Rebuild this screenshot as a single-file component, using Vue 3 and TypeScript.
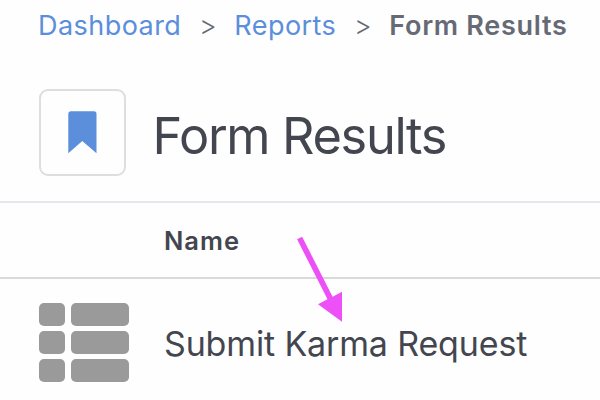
<script setup lang="ts">
interface Crumb {
  label: string
  current: boolean
}

const crumbs: Crumb[] = [
  { label: 'Dashboard', current: false },
  { label: 'Reports', current: false },
  { label: 'Form Results', current: true },
]

const rows: string[] = ['Submit Karma Request']
</script>

<template>
  <main class="page">
    <nav class="crumbs">
      <template v-for="(crumb, i) in crumbs" :key="crumb.label">
        <span v-if="i > 0" class="sep">&gt;</span>
        <span v-if="crumb.current" class="current">{{ crumb.label }}</span>
        <a v-else class="link">{{ crumb.label }}</a>
      </template>
    </nav>

    <header class="heading">
      <div class="bookmark">
        <svg width="29" height="43" viewBox="0 0 29 43">
          <path d="M3 0.3H26Q28.5 0.3 28.5 3V42.3L14.3 30L0.3 42.3V3Q0.3 0.3 3 0.3Z" fill="#5b8edb" />
        </svg>
      </div>
      <h1 class="title">Form Results</h1>
    </header>

    <section class="table">
      <div class="thead"><span class="column">Name</span></div>
      <div v-for="row in rows" :key="row" class="row">
        <div class="list-icon">
          <i v-for="n in 6" :key="n" class="cell"></i>
        </div>
        <span class="name">{{ row }}</span>
      </div>
    </section>

    <svg class="arrow" width="50" height="90" viewBox="0 0 50 90">
      <path d="M2.1 4.3L7.1 1.7L37.6 61.7L47 56.7V86.7L23 69.3L32.5 64.3Z" fill="#ed50f7" />
    </svg>
  </main>
</template>

<style>
body {
  margin: 0;
  background: #fefefe;
}
</style>

<style scoped>
.page {
  position: relative;
  box-sizing: border-box;
  width: 600px;
  height: 400px;
  overflow: hidden;
  background: #fefefe;
  color: #43464f;
  font-family: Inter, "Liberation Sans", sans-serif;
  white-space: nowrap;
}

.crumbs {
  display: flex;
  align-items: center;
  height: 51px;
  padding-left: 38px;
  font-size: 27px;
}

.link {
  letter-spacing: 0.45px;
  color: #5b8edb;
}

.sep {
  width: 53px;
  text-align: center;
  font-size: 27px;
  font-weight: 300;
  color: #666a75;
}

.current {
  font-weight: 600;
  letter-spacing: 0.7px;
  color: #666a75;
}

.heading {
  display: flex;
  align-items: center;
  height: 87px;
  margin-top: 38px;
  padding-left: 39px;
}

.bookmark {
  display: flex;
  align-items: center;
  justify-content: center;
  box-sizing: border-box;
  width: 87px;
  height: 87px;
  border: 2px solid #dedede;
  border-radius: 9px;
}

.title {
  margin: 0 0 0 26.5px;
  padding-top: 5px;
  font-size: 50.5px;
  font-weight: 400;
  line-height: 87px;
  letter-spacing: -1.35px;
}

.table {
  margin-top: 25px;
}

.thead {
  display: flex;
  align-items: center;
  height: 74px;
  padding-left: 164px;
  border-top: 2px solid #e6e7ee;
  border-bottom: 2px solid #d9d9d9;
}

.column {
  padding-top: 1px;
  font-size: 25.5px;
  font-weight: 600;
  letter-spacing: 1px;
}

.row {
  display: flex;
  align-items: center;
  height: 126px;
}

.list-icon {
  display: grid;
  grid-template-columns: 26px 58px;
  grid-template-rows: repeat(3, 23px);
  gap: 5px 6px;
  margin-left: 38.5px;
}

.cell {
  background: #9a9a9a;
  border-radius: 5px;
}

.name {
  margin-left: 35.5px;
  padding-top: 2px;
  font-size: 34px;
  letter-spacing: -0.15px;
}

.arrow {
  position: absolute;
  left: 295px;
  top: 235px;
}
</style>
